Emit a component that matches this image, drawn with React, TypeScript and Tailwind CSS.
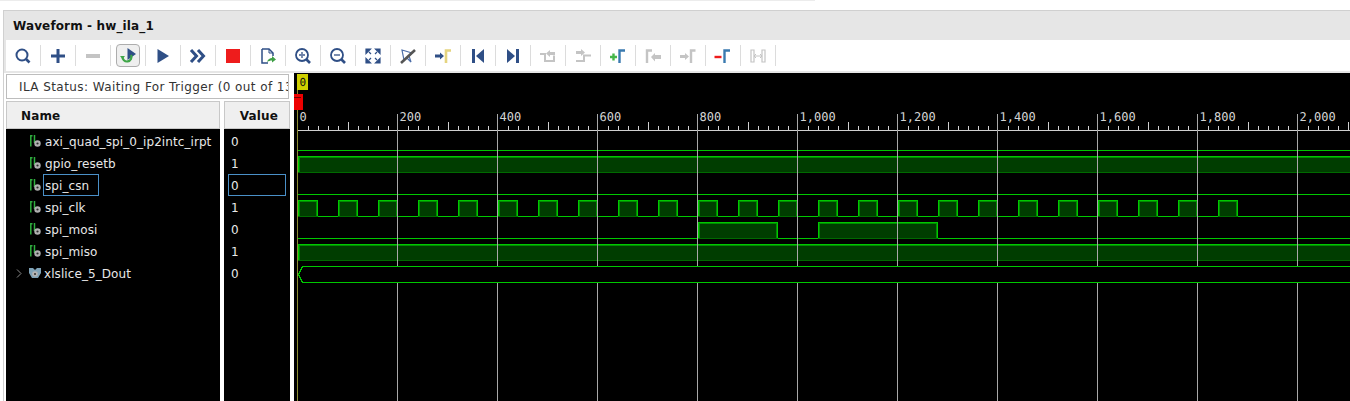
import type { ReactNode } from 'react'

const BLUE = '#2f4f86'
const GRAY = '#c4c4c4'

function Ico({ children }: { children: ReactNode }) {
  return (
    <svg width="20" height="20" viewBox="0 0 20 20" fill="none">
      {children}
    </svg>
  )
}

const tools: ReactNode[] = [
  <><circle cx="9" cy="9" r="5.5" stroke={BLUE} strokeWidth="2" /><path d="M13 13l3.5 3.5" stroke={BLUE} strokeWidth="2.6" /></>,
  <path d="M3 10h14M10 3v14" stroke={BLUE} strokeWidth="3" />,
  <path d="M3 10h14" stroke={GRAY} strokeWidth="4" />,
  null,
  <path d="M4.500 3l11.500 7-11.500 7z" fill={BLUE} />,
  <path d="M3 4l5.500 6L3 16M10 4l5.500 6-5.500 6" stroke={BLUE} strokeWidth="3" />,
  <rect x="3" y="3" width="14" height="14" fill="#ee1c1c" />,
  <><path d="M4 3h7l4 4v3M4 3v14h6" stroke={BLUE} strokeWidth="1.500" /><path d="M11 3v4h4" stroke={BLUE} strokeWidth="1" /><path d="M9 16c1-3 3-4 5-4v-2l4 3.500-4 3v-2c-2 0-3 .5-5 1.500z" fill="#3f9f46" /></>,
  <><circle cx="9" cy="9" r="6" stroke={BLUE} strokeWidth="1.800" /><path d="M13.500 13.500l3.500 3.500" stroke={BLUE} strokeWidth="2.600" /><path d="M6 9h6M9 6v6" stroke="#6d82a8" strokeWidth="1.800" /></>,
  <><circle cx="9" cy="9" r="6" stroke={BLUE} strokeWidth="1.800" /><path d="M13.500 13.500l3.500 3.500" stroke={BLUE} strokeWidth="2.600" /><path d="M6 9h6" stroke="#6d82a8" strokeWidth="1.800" /></>,
  <path d="M3 3h4.500L3 7.500zM17 3h-4.500L17 7.500zM3 17h4.500L3 12.500zM17 17h-4.500L17 12.500zM6 6l2 2M14 6l-2 2M6 14l2-2M14 14l-2-2" fill={BLUE} stroke={BLUE} strokeWidth="1.200" />,
  <><path d="M4 4l10 3-3 3 2 6-4-4-3 2z" stroke="#4d6ea8" strokeWidth="1.200" /><path d="M3 17L17 4" stroke="#555" strokeWidth="2.600" /></>,
  <><path d="M2 8.500h5V6.500l4 3.500-4 3.500v-2H2z" fill={BLUE} /><path d="M13 17V4.500h5" stroke="#e5d47f" strokeWidth="2.600" /></>,
  <><rect x="4" y="3" width="3" height="14" fill={BLUE} /><path d="M16 3v14L8 10z" fill={BLUE} /></>,
  <><rect x="13" y="3" width="3" height="14" fill={BLUE} /><path d="M4 3v14l8-7z" fill={BLUE} /></>,
  <><path d="M2 8h5v7h9V9.500" stroke={GRAY} strokeWidth="2" /><path d="M8 7.500l4-3.500v2h5v3h-5v2z" fill={GRAY} /></>,
  <><path d="M3 15h8V9.500h7" stroke={GRAY} strokeWidth="2" /><path d="M3 5h5V3l4 3.500L8 10V8H3z" fill={GRAY} /></>,
  <><path d="M2 11h7M5.500 7.500v7" stroke="#45b649" strokeWidth="2.400" /><path d="M11.500 17V4.500h5.500" stroke="#3a7ab0" strokeWidth="2.400" /></>,
  <><path d="M4 17V4.500h5" stroke={GRAY} strokeWidth="2.400" /><path d="M18 9v4h-6v2.500L8 11l4-4v2z" fill={GRAY} /></>,
  <><path d="M2 9h5V7l4 3.500L7 14v-2H2z" fill={GRAY} /><path d="M13 17V4.500h4.500" stroke={GRAY} strokeWidth="2.400" /></>,
  <><path d="M1.500 11h7" stroke="#ee1c1c" strokeWidth="2.400" /><path d="M11.500 17V4.500h5.500" stroke="#3a7ab0" strokeWidth="2.400" /></>,
  <><path d="M3 4h3v12H3zM14 4h3v12h-3z" stroke={GRAY} strokeWidth="1.200" /><path d="M6 10h8M8 8l-2 2 2 2M12 8l2 2-2 2" stroke={GRAY} strokeWidth="1" /></>,
]

function RunIcon() {
  return (
    <div className="flex h-[23px] w-[24px] items-center justify-center rounded-sm border border-[#adadad] bg-[#efefef]">
      <svg width="20" height="20" viewBox="0 0 20 20" fill="none">
        <path d="M9.500 2l8.500 6-8.500 6z" fill={BLUE} />
        <path d="M4.500 10.500a4.500 4.500 0 1 0 8.500-1.500" stroke="#3fa648" strokeWidth="2.200" />
        <path d="M2 10h5l-2.500 3z" fill="#3fa648" />
      </svg>
    </div>
  )
}

function Toolbar() {
  return (
    <div className="ml-[2px] flex h-[31px] items-center bg-white">
      {tools.map((tool, i) => (
        <div key={i} className="flex items-center">
          <div className="flex w-[34px] items-center justify-center">
            {tool ? <Ico>{tool}</Ico> : <RunIcon />}
          </div>
          <div className="h-[21px] w-px bg-[#dcdcdc]" />
        </div>
      ))}
    </div>
  )
}

function SignalIcon() {
  return (
    <svg width="11" height="12" viewBox="0 0 11 12" fill="none" className="shrink-0">
      <path d="M.8 0v11.500M.8.7H2.500M4.500 0v8" stroke="#2fae3e" strokeWidth="1.500" />
      <circle cx="7.500" cy="8.500" r="3.200" fill="#b0b0b0" />
      <circle cx="7.500" cy="8.500" r="1.100" fill="#2a2a2a" />
    </svg>
  )
}

function BusIcon() {
  return (
    <svg width="12" height="11" viewBox="0 0 12 11" fill="none" className="shrink-0">
      <path d="M0 0h4l2 2 2-2h4v5l-3 5H3L0 5z" fill="#7fa3b8" />
      <circle cx="6" cy="6" r="2.800" fill="#b5b5b5" />
      <circle cx="6" cy="6" r="1" fill="#333" />
    </svg>
  )
}

const signals = [
  { name: 'axi_quad_spi_0_ip2intc_irpt', value: '0' },
  { name: 'gpio_resetb', value: '1' },
  { name: 'spi_csn', value: '0', selected: true },
  { name: 'spi_clk', value: '1' },
  { name: 'spi_mosi', value: '0' },
  { name: 'spi_miso', value: '1' },
  { name: 'xlslice_5_Dout', value: '0', bus: true },
]

function NameColumn() {
  return (
    <div className="flex w-[214px] flex-col">
      <div className="flex h-[28px] items-center border border-[#c8c8c8] bg-[#efefef] pl-[14px] pt-px text-[12px] font-bold tracking-[0.15px] text-[#111]">
        Name
      </div>
      <div className="h-[272px] bg-black pt-px text-[12px] tracking-[0.08px] text-[#e8e8e8]">
        {signals.map((s) => (
          <div key={s.name} className="flex h-[22px] items-center">
            {s.bus ? (
              <>
                <svg width="6" height="9" viewBox="0 0 6 9" fill="none" className="ml-[10px] mr-[7px] shrink-0">
                  <path d="M1 .5L5 4.500 1 8.500" stroke="#8a8a8a" strokeWidth="1" />
                </svg>
                <BusIcon />
                <span className="ml-[3px] pt-[2px]">{s.name}</span>
              </>
            ) : (
              <>
                <div className="ml-[24px]">
                  <SignalIcon />
                </div>
                <span
                  className={
                    'ml-[2px] flex h-[22px] items-center border pl-px pt-[2px] ' +
                    (s.selected ? 'w-[56px] border-[#4a90c8]' : 'border-transparent')
                  }
                >
                  {s.name}
                </span>
              </>
            )}
          </div>
        ))}
      </div>
    </div>
  )
}

function ValueColumn() {
  return (
    <div className="ml-[4px] flex w-[66px] flex-col">
      <div className="flex h-[28px] items-center justify-end border border-[#c8c8c8] bg-[#efefef] pr-[11px] pt-px text-[12px] font-bold tracking-[0.15px] text-[#111]">
        Value
      </div>
      <div className="h-[272px] bg-black pt-px text-[12px] text-[#e8e8e8]">
        {signals.map((s) => (
          <div key={s.name} className="flex h-[22px] items-center px-[4px]">
            <span
              className={
                'flex h-[22px] w-[58px] items-center border pl-[2px] pt-[2px] ' +
                (s.selected ? 'border-[#4a90c8]' : 'border-transparent')
              }
            >
              {s.value}
            </span>
          </div>
        ))}
      </div>
    </div>
  )
}

const LO = '#00c800'
const DIM = '#006a00'
const FILL = '#003d00'

function Pulse({ from, to, top }: { from: number; to: number; top: number }) {
  const bottom = top + 16
  return (
    <g>
      <rect x={from} y={top} width={to - from} height={16} fill={FILL} />
      <path d={`M${from + 1} ${top + 1.5}H${to}M${from + 1.5} ${top + 1}V${bottom}M${to - 1.5} ${top + 1}V${bottom}`} stroke="#008c00" />
      <path d={`M${from} ${bottom + 0.5}H${to}`} stroke={DIM} />
      <path d={`M${from + 0.5} ${bottom}V${top + 0.5}H${to - 0.5}V${bottom}`} stroke={LO} />
    </g>
  )
}

const X0 = 298
const majors = Array.from({ length: 11 }, (_, i) => i)
const minors = Array.from({ length: 106 }, (_, i) => i)
const clkEdges = Array.from({ length: 24 }, (_, i) => X0 + i * 40)

function WaveCanvas() {
  return (
    <svg width="1056" height="328" viewBox="294 73 1056 328" fill="none" shapeRendering="crispEdges" className="block">
      <rect x="294" y="73" width="1056" height="328" fill="#000" />

      {/* low levels */}
      {[150, 194, 216, 238].map((y) => (
        <path key={y} d={`M${X0} ${y + 0.5}H1350`} stroke={LO} />
      ))}

      {/* high levels */}
      <Pulse from={X0} to={1352} top={156} />
      <Pulse from={X0} to={1352} top={244} />
      {clkEdges.map((x) => (
        <Pulse key={x} from={x} to={x + 20} top={200} />
      ))}
      <Pulse from={698} to={778} top={222} />
      <Pulse from={818} to={938} top={222} />

      {/* ruler */}
      <path d={`M${X0} 130.5H1350`} stroke="#d0d0d0" />
      {minors.map((i) => {
        const x = X0 + i * 10 + 0.5
        const h = i % 10 === 0 ? 0 : i % 5 === 0 ? 8 : 4
        return h ? <path key={i} d={`M${x} ${130 - h}V130`} stroke="#d0d0d0" /> : null
      })}
      {majors.map((i) => {
        const x = X0 + i * 100 - 0.5
        const v = i * 200
        return (
          <g key={i}>
            {i > 0 && <path d={`M${x} 114V401`} stroke="#a8a8a8" />}
            <text
              x={x + 2}
              y={120.5}
              fill="#d4d4d4"
              fontSize="12"
              fontFamily="'DejaVu Sans Mono', monospace"
              textRendering="geometricPrecision"
            >
              {v.toLocaleString('en-US')}
            </text>
          </g>
        )
      })}

      {/* bus */}
      <path d="M1352 266.5H302.5L298.5 274.5L302.5 282.5H1352" fill="#000" stroke={LO} />

      {/* cursor and markers */}
      <path d="M297.5 90V401" stroke="#8c8c32" />
      <rect x="297" y="74" width="11" height="16" fill="#cfcf00" />
      <text x="299.5" y="86" fill="#111" fontSize="11" fontFamily="'DejaVu Sans Mono', monospace" textRendering="geometricPrecision">
        0
      </text>
      <rect x="294" y="94" width="9" height="16" fill="#ee0000" />
      <path d="M294 97.5H301" stroke="#700000" />
    </svg>
  )
}

export default function App() {
  return (
    <div className="h-[401px] w-[1350px] overflow-hidden bg-white font-['DejaVu_Sans',sans-serif]">
      <div className="h-px w-[815px] bg-[#ececec]" />
      <div className="ml-[3px] mt-[9px] border-l border-t border-[#d0d0d0] bg-[#e6e6e6]">
        <div className="flex h-[29px] items-center pl-[9px] pt-px text-[12px] font-bold tracking-[0.13px] text-[#111]">Waveform - hw_ila_1</div>
        <Toolbar />
        <div className="h-[2px]" />
        <div className="flex bg-white pl-[2px]">
          <div className="w-[284px]">
            <div className="mt-px flex h-[25px] w-[283px] items-center overflow-hidden whitespace-nowrap border border-[#bdbdbd] bg-white pl-[12px] text-[12px] tracking-[0.42px] text-[#333]">
              ILA Status: Waiting For Trigger (0 out of 13
            </div>
            <div className="mt-[2px] flex">
              <NameColumn />
              <ValueColumn />
            </div>
          </div>
          <div className="ml-[4px]">
            <WaveCanvas />
          </div>
        </div>
      </div>
    </div>
  )
}
